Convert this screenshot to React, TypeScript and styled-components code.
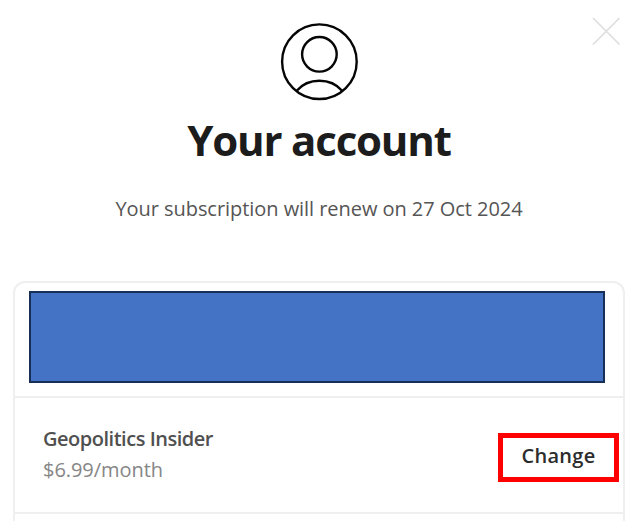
import React from "react";
import styled, { createGlobalStyle } from "styled-components";

const GlobalStyle = createGlobalStyle`
  * { box-sizing: border-box; }
  body { margin: 0; background: #fff; overflow: hidden; }
`;

const Dialog = styled.main`
  position: relative;
  width: 639px;
  height: 530px;
  padding: 22px 14px 9px 13px;
  display: flex;
  flex-direction: column;
  background: #fff;
  font-family: "Open Sans", "Noto Sans", sans-serif;
`;

const CloseButton = styled.button`
  position: absolute;
  top: 16px;
  right: 18px;
  width: 30px;
  height: 30px;
  padding: 0;
  border: 0;
  background: none;
  svg { display: block; }
`;

const Header = styled.header`
  height: 259px;
  flex: none;
  display: flex;
  flex-direction: column;
  align-items: center;
`;

const Avatar = styled.svg`
  width: 80px;
  height: 80px;
  flex: none;
`;

const Title = styled.h1`
  margin: 9px 0 0;
  font-size: 42px;
  line-height: 58px;
  font-weight: 700;
  letter-spacing: -1.2px;
  color: #1c1c1c;
  white-space: nowrap;
`;

const Renewal = styled.p`
  margin: 26px 0 0;
  font-size: 20px;
  line-height: 28px;
  letter-spacing: -0.05px;
  color: #555;
  white-space: nowrap;
`;

const Card = styled.section`
  flex: 1;
  border: 2px solid #efefef;
  border-bottom: 0;
  border-radius: 12px 12px 0 0;
`;

const Banner = styled.div`
  height: 115px;
  padding: 8px 18px 0 14px;
  border-bottom: 2px solid #efefef;
`;

const Redacted = styled.div`
  height: 92px;
  border: 2px solid #172f56;
  background: #4472c4;
`;

const PlanRow = styled.div`
  height: 116px;
  padding: 25px 4px 0 28px;
  display: flex;
  justify-content: space-between;
  border-bottom: 2px solid #efefef;
`;

const PlanName = styled.div`
  font-size: 20px;
  line-height: 32px;
  font-weight: 600;
  letter-spacing: -0.48px;
  color: #505050;
`;

const PlanPrice = styled.div`
  font-size: 20px;
  line-height: 30px;
  letter-spacing: -0.05px;
  color: #868686;
`;

const ChangeButton = styled.button`
  width: 121px;
  height: 49px;
  margin-top: 10px;
  padding: 0 0 4px;
  border: 5px solid #f00;
  background: #fff;
  font: 600 20px/28px "Open Sans", "Noto Sans", sans-serif;
  letter-spacing: 0.3px;
  color: #2c2c2c;
`;

export default function App() {
  return (
    <>
      <GlobalStyle />
      <Dialog>
        <CloseButton aria-label="Close">
          <svg width="30" height="30" viewBox="0 0 30 30" stroke="#dedede" strokeWidth="1.7">
            <path d="M2 2 28.5 28.5M28.5 2 2 28.5" />
          </svg>
        </CloseButton>
        <Header>
          <Avatar viewBox="0 0 80 80" fill="none" stroke="#050505" strokeWidth="2.4">
            <circle cx="40.4" cy="39.7" r="37.3" />
            <circle cx="40.4" cy="32.3" r="17.3" />
            <path d="M17.7 68.7C23.4 62 31.4 58.7 40.4 58.7s17 3.3 22.7 10" />
          </Avatar>
          <Title>Your account</Title>
          <Renewal>Your subscription will renew on 27 Oct 2024</Renewal>
        </Header>
        <Card>
          <Banner>
            <Redacted />
          </Banner>
          <PlanRow>
            <div>
              <PlanName>Geopolitics Insider</PlanName>
              <PlanPrice>$6.99/month</PlanPrice>
            </div>
            <ChangeButton>Change</ChangeButton>
          </PlanRow>
        </Card>
      </Dialog>
    </>
  );
}
